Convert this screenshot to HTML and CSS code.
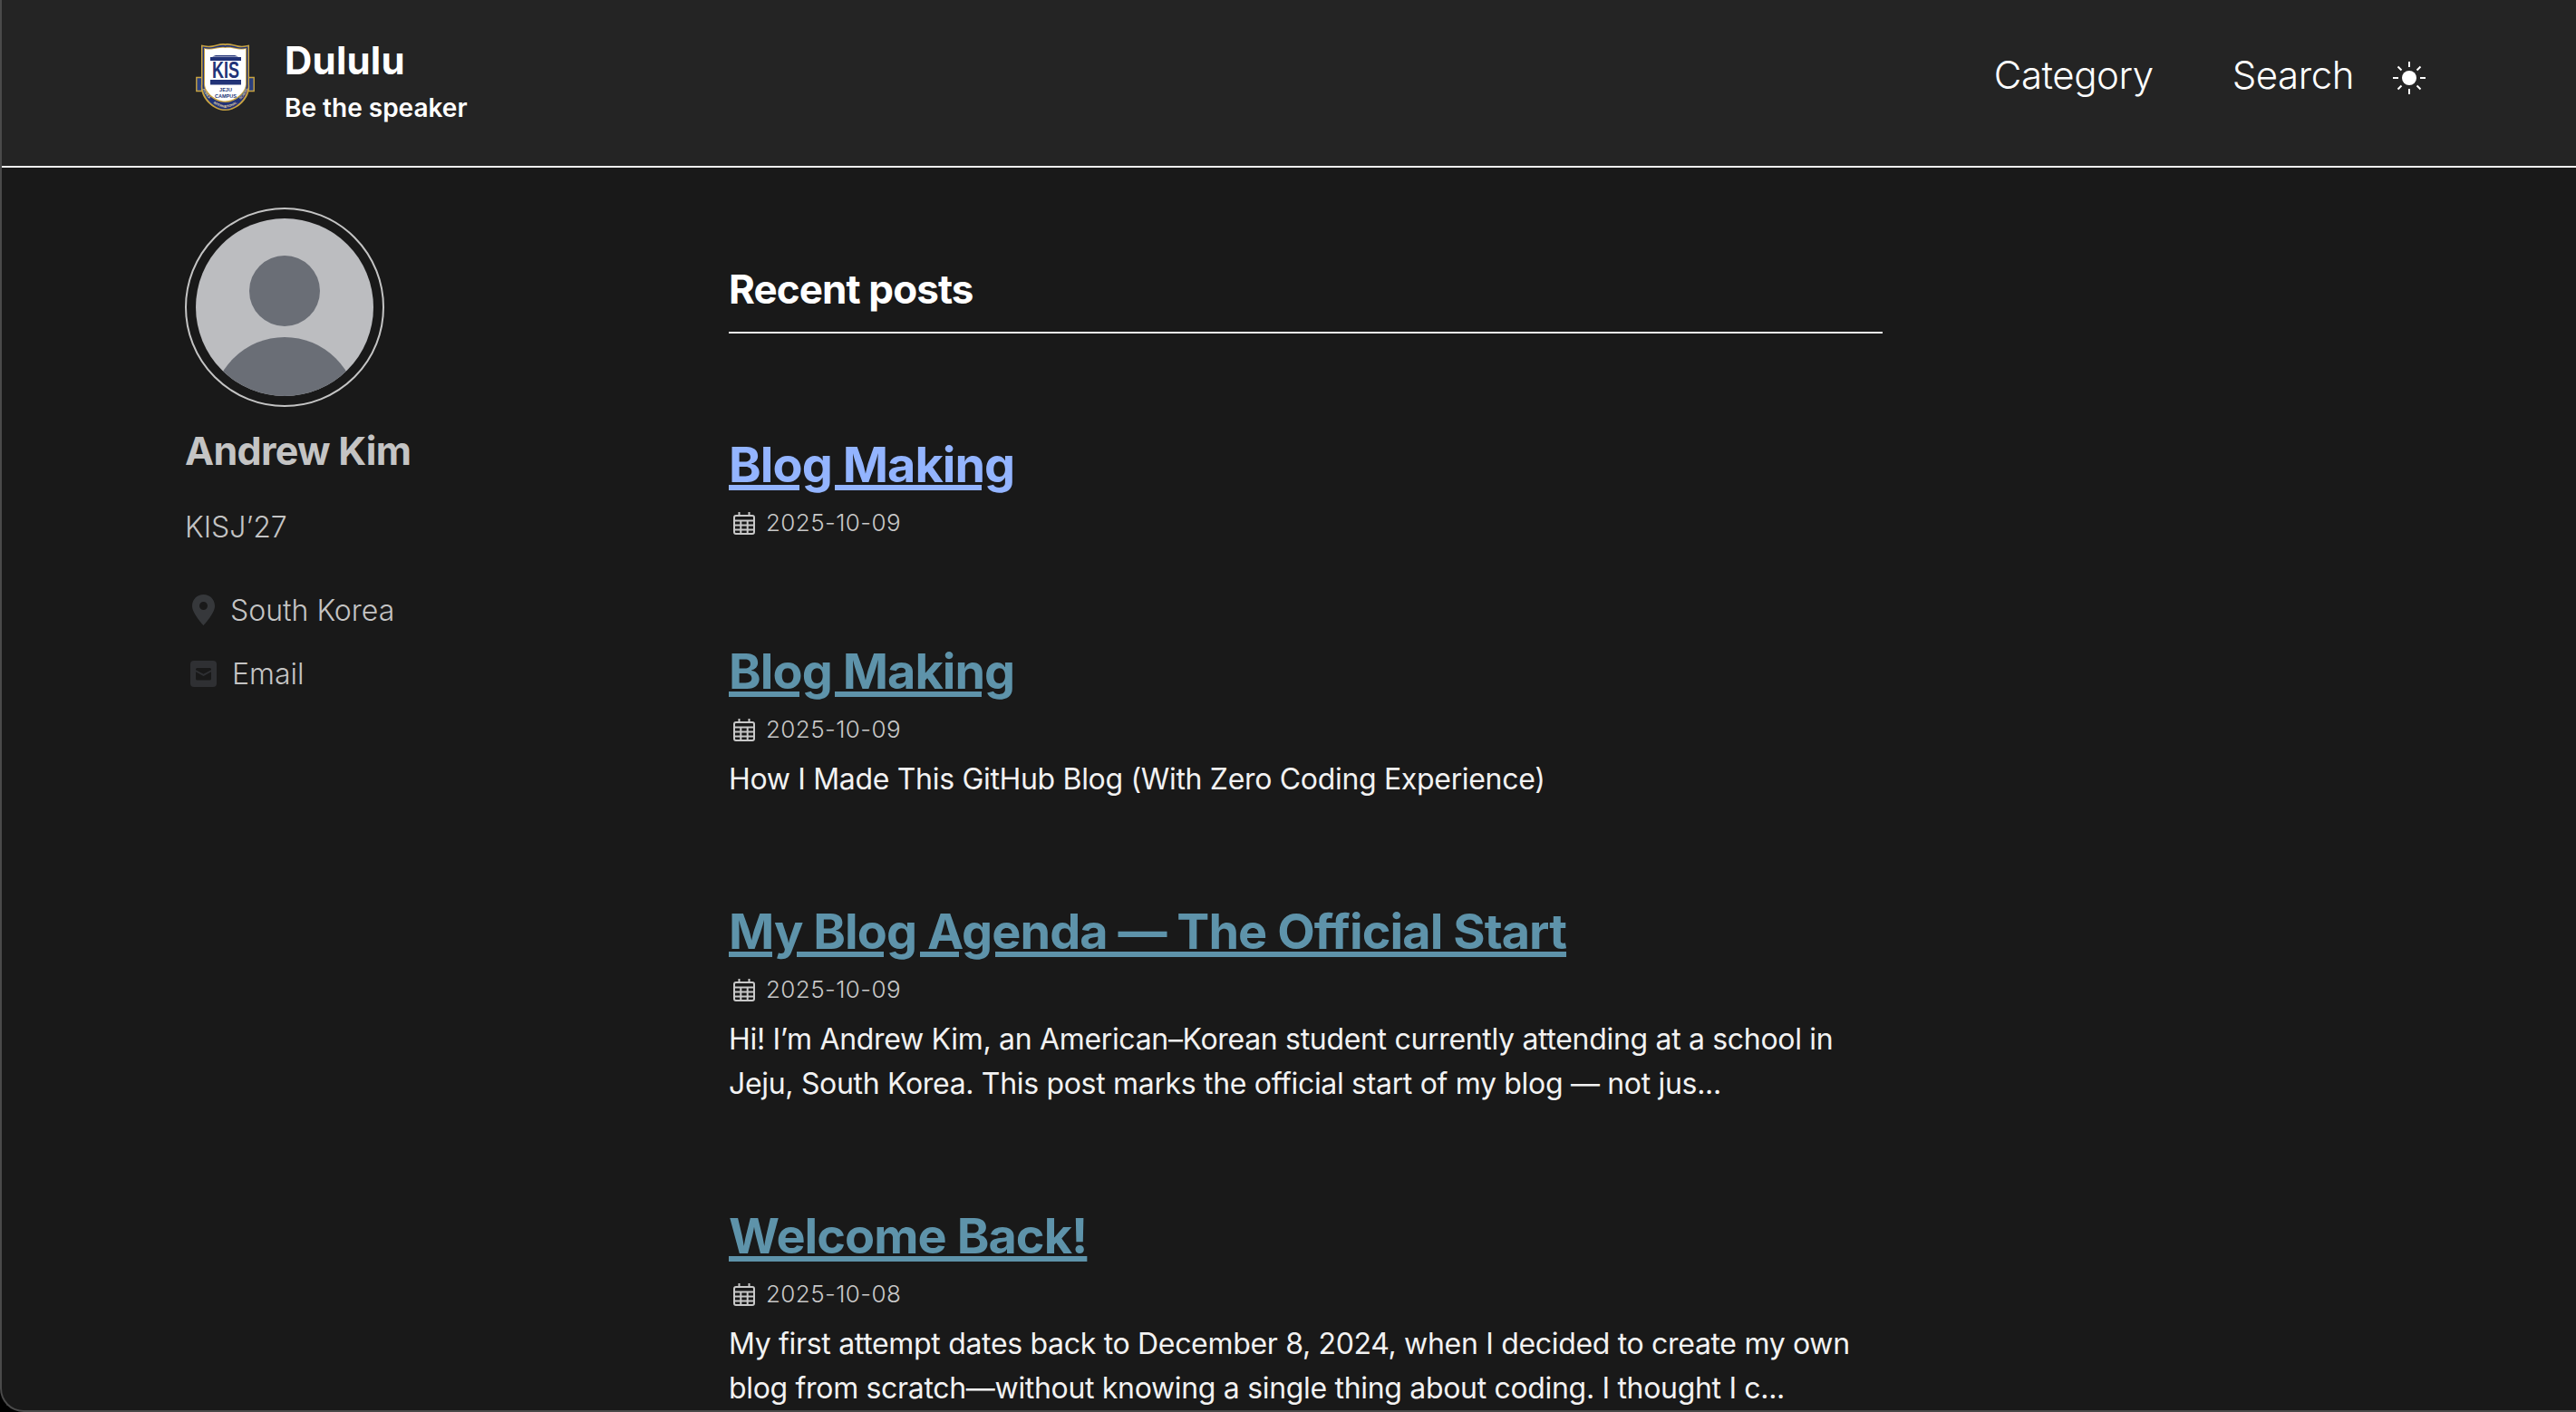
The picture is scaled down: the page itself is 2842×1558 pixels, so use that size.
FILE: index.html
```html
<!DOCTYPE html>
<html lang="en">
<head>
<meta charset="utf-8">
<title>Dululu</title>
<link rel="stylesheet" href="styles.css">
</head>
<body>
<div class="window">
  <header class="masthead">
    <a class="brand">
      <svg class="logo" viewBox="0 0 65 76" width="65" height="76">
        <defs>
          <path id="logo-arc-left" d="M7 50Q10 58 16 63"/>
          <path id="logo-arc-mid" d="M16 64Q24 71.500 32.500 71.500T49 64"/>
          <path id="logo-arc-right" d="M49 63Q55 58 58 50"/>
        </defs>
        <path d="M.8 38.500h6v15h-6zM58.200 38.500h6v15h-6z" fill="#2a3f7e" stroke="#c9a441" stroke-width="1.400"/>
        <path d="M6 2.500c4 1 8 1.500 12 .8 5-1 10-3.300 14.500-2 4.500-1.300 9.500 1 14.500 2 4 .7 8 .2 12-.8V46C61 60 47 75 32.500 75S4 60 6 46z" fill="#c9a441"/>
        <path d="M7.500 4.300c4 .9 7.500 1.200 11 .6 5-1 10-2.800 14-1.700 4-1.100 9 .7 14 1.700 3.500.6 7 .3 11-.6V46C59 58 46 73.500 32.500 73.500S6 58 7.500 46z" fill="#223377"/>
        <path d="M9 6c3.500.7 6.500.9 9.800.3 5-1 9.700-2.300 13.700-1.300 4-1 8.700.3 13.700 1.300 3.300.6 6.300.4 9.800-.3v40C56 55 45 66 32.500 66S9 55 9 46z" fill="#c9a441"/>
        <path d="M10 7c3 .6 5.800.8 8.800.3 5-1 9.700-2.300 13.700-1.300 4-1 8.700.3 13.700 1.300 3 .5 5.800.3 8.800-.3v39C55 54 44 64.500 32.500 64.500S10 54 10 46z" fill="#fff"/>
        <path d="M18 15.500 22 14H43l4 1.500zM16 16h34v4H16zM16 41h34v5.500H16z" fill="#223377"/>
        <text x="33" y="39" textLength="30" lengthAdjust="spacingAndGlyphs" class="logo-kis">KIS</text>
        <text x="33" y="54" class="logo-small">JEJU</text>
        <text x="33" y="60.500" class="logo-small">CAMPUS</text>
        <text class="logo-banner"><textPath href="#logo-arc-left" startOffset="50%">KOREA</textPath></text>
        <text class="logo-banner"><textPath href="#logo-arc-mid" startOffset="50%">INTERNATIONAL</textPath></text>
        <text class="logo-banner"><textPath href="#logo-arc-right" startOffset="50%">SCHOOL</textPath></text>
      </svg>
      <span class="brand-text">
        <span class="brand-title">Dululu</span>
        <span class="brand-sub">Be the speaker</span>
      </span>
    </a>
    <nav class="nav">
      <a class="nav-link">Category</a>
      <a class="nav-link">Search</a>
      <svg class="sun" viewBox="0 0 36 36" width="36" height="36">
        <circle cx="18" cy="18" r="8" fill="#fff"/>
        <g stroke="#fff" stroke-width="2" fill="none">
          <path d="M18 0v6M18 30v6M0 18h6M30 18h6M5.500 5.500l4 4M30.500 5.500l-4 4M5.500 30.500l4-4M30.500 30.500l-4-4"/>
        </g>
      </svg>
    </nav>
  </header>

  <div class="layout">
    <aside class="sidebar">
      <div class="avatar">
        <svg viewBox="0 0 196 196" width="196" height="196">
          <defs><clipPath id="avatar-clip"><circle cx="98" cy="98" r="98"/></clipPath></defs>
          <g clip-path="url(#avatar-clip)">
            <rect width="196" height="196" fill="#bcbdc0"/>
            <circle cx="98" cy="80" r="39" fill="#6a6e76"/>
            <circle cx="98" cy="211" r="80" fill="#6a6e76"/>
          </g>
        </svg>
      </div>
      <h3 class="author-name">Andrew Kim</h3>
      <p class="author-bio">KISJ’27</p>
      <ul class="author-links">
        <li class="author-link">
          <svg class="icon-pin" viewBox="0 0 25 34" width="25" height="34"><path fill-rule="evenodd" d="M12.500 0C5.600 0 0 5.500 0 12.400 0 21 12.500 34 12.500 34S25 21 25 12.400C25 5.500 19.400 0 12.500 0zm0 8a4.500 4.500 0 1 1 0 9 4.500 4.500 0 0 1 0-9z" fill="#36383b"/></svg>
          <span>South Korea</span>
        </li>
        <li class="author-link">
          <svg class="icon-mail" viewBox="0 0 29 29" width="29" height="29"><rect width="29" height="29" rx="4" fill="#2f3033"/><path d="M6 9.500a1.500 1.500 0 0 1 1.500-1.500h14A1.500 1.500 0 0 1 23 9.500v.7l-8.500 4.600L6 10.200zM6 12.300l8.500 4.600 8.500-4.600V20a1.500 1.500 0 0 1-1.500 1.500h-14A1.500 1.500 0 0 1 6 20z" fill="#191919"/></svg>
          <span>Email</span>
        </li>
      </ul>
    </aside>

    <main class="content">
      <h2 class="section-title">Recent posts</h2>

      <article class="post">
        <h2 class="post-title"><a class="post-link post-link-hover">Blog Making</a></h2>
        <p class="post-meta">
          <svg class="icon-cal" viewBox="0 0 24 25" width="24" height="25"><path d="M3 4h18a2 2 0 0 1 2 2v16a2 2 0 0 1-2 2H3a2 2 0 0 1-2-2V6a2 2 0 0 1 2-2zM1 9.500h22M1 14.500h22M1 19.500h22M8.300 9.500V24M15.700 9.500V24M6.500 0v4M17.500 0v4" fill="none" stroke="#c8c8c8" stroke-width="2"/></svg>
          <span>2025-10-09</span>
        </p>
      </article>

      <article class="post">
        <h2 class="post-title"><a class="post-link">Blog Making</a></h2>
        <p class="post-meta">
          <svg class="icon-cal" viewBox="0 0 24 25" width="24" height="25"><path d="M3 4h18a2 2 0 0 1 2 2v16a2 2 0 0 1-2 2H3a2 2 0 0 1-2-2V6a2 2 0 0 1 2-2zM1 9.500h22M1 14.500h22M1 19.500h22M8.300 9.500V24M15.700 9.500V24M6.500 0v4M17.500 0v4" fill="none" stroke="#c8c8c8" stroke-width="2"/></svg>
          <span>2025-10-09</span>
        </p>
        <p class="post-excerpt">How I Made This GitHub Blog (With Zero Coding Experience)</p>
      </article>

      <article class="post">
        <h2 class="post-title"><a class="post-link">My Blog Agenda — The Official Start</a></h2>
        <p class="post-meta">
          <svg class="icon-cal" viewBox="0 0 24 25" width="24" height="25"><path d="M3 4h18a2 2 0 0 1 2 2v16a2 2 0 0 1-2 2H3a2 2 0 0 1-2-2V6a2 2 0 0 1 2-2zM1 9.500h22M1 14.500h22M1 19.500h22M8.300 9.500V24M15.700 9.500V24M6.500 0v4M17.500 0v4" fill="none" stroke="#c8c8c8" stroke-width="2"/></svg>
          <span>2025-10-09</span>
        </p>
        <p class="post-excerpt">Hi! I’m Andrew Kim, an American–Korean student currently attending at a school in Jeju, South Korea. This post marks the official start of my blog — not jus...</p>
      </article>

      <article class="post">
        <h2 class="post-title"><a class="post-link">Welcome Back!</a></h2>
        <p class="post-meta">
          <svg class="icon-cal" viewBox="0 0 24 25" width="24" height="25"><path d="M3 4h18a2 2 0 0 1 2 2v16a2 2 0 0 1-2 2H3a2 2 0 0 1-2-2V6a2 2 0 0 1 2-2zM1 9.500h22M1 14.500h22M1 19.500h22M8.300 9.500V24M15.700 9.500V24M6.500 0v4M17.500 0v4" fill="none" stroke="#c8c8c8" stroke-width="2"/></svg>
          <span>2025-10-08</span>
        </p>
        <p class="post-excerpt">My first attempt dates back to December 8, 2024, when I decided to create my own blog from scratch—without knowing a single thing about coding. I thought I c...</p>
      </article>
    </main>
  </div>
</div>
</body>
</html>
```

FILE: styles.css
```css
* { box-sizing: border-box; }

html, body {
  margin: 0;
  height: 100%;
  background: #000;
  overflow: hidden;
}

body {
  font-family: Inter, "Liberation Sans", sans-serif;
  color: #fff;
}

.window {
  height: 100vh;
  overflow: hidden;
  background: #191919;
  border-left: 2px solid #4a4a4a;
  border-bottom: 2px solid #4a4a4a;
  border-bottom-left-radius: 26px;
}

.masthead {
  display: flex;
  justify-content: space-between;
  align-items: center;
  height: 185px;
  padding: 0 166px 14px 214px;
  background: #242424;
  border-bottom: 2px solid #eee;
}

.brand {
  display: flex;
  align-items: center;
  gap: 33px;
}

.logo { display: block; }

.logo-kis {
  font: 700 25px "Liberation Sans", sans-serif;
  fill: #223377;
  text-anchor: middle;
}

.logo-small {
  font: 700 5.500px "Liberation Sans", sans-serif;
  fill: #223377;
  text-anchor: middle;
}

.logo-banner {
  font: 700 3.600px "Liberation Sans", sans-serif;
  fill: #e6d9a8;
  text-anchor: middle;
}

.brand-text {
  display: flex;
  flex-direction: column;
  gap: 10px;
  padding-top: 8px;
}

.brand-title {
  font-size: 42px;
  font-weight: 700;
  letter-spacing: 0.2px;
  line-height: 50px;
}

.brand-sub {
  font-size: 28px;
  font-weight: 600;
  line-height: 34px;
}

.nav {
  display: flex;
  align-items: center;
}

.nav-link {
  font-size: 42px;
  font-weight: 300;
  letter-spacing: -0.45px;
  line-height: 50px;
  margin: 0 87px 3px 0;
}

.nav-link:nth-child(2) { margin-right: 43px; }

.sun { display: block; margin-top: 2px; }

.layout {
  display: flex;
  padding-left: 202px;
}

.sidebar {
  flex: 0 0 600px;
  padding-top: 44px;
  color: #c4c4c4;
}

.avatar {
  width: 220px;
  height: 220px;
  padding: 10px;
  border: 2px solid #c4c4c4;
  border-radius: 50%;
}

.avatar svg { display: block; }

.author-name {
  margin: 21px 0 0;
  font-size: 43px;
  font-weight: 700;
  letter-spacing: -0.7px;
  line-height: 54px;
}

.author-bio {
  margin: 33px 0 0;
  font-size: 32px;
  font-weight: 300;
  line-height: 50px;
}

.author-links {
  list-style: none;
  margin: 31px 0 0;
  padding: 0;
}

.author-link {
  display: flex;
  align-items: center;
  height: 70px;
  font-size: 32px;
  font-weight: 300;
  gap: 17px;
  padding-left: 8px;
}

.icon-mail { margin-left: -2px; }

.content {
  flex: 0 0 1273px;
  padding-top: 108px;
}

.section-title {
  margin: 0;
  padding-bottom: 21px;
  font-size: 44px;
  font-weight: 700;
  letter-spacing: -0.9px;
  line-height: 52px;
  border-bottom: 2px solid #eee;
}

.post { margin-top: 108px; }

.post:first-of-type { margin-top: 109px; }

.post-title {
  margin: 0;
  font-size: 54px;
  font-weight: 650;
  letter-spacing: -0.95px;
  line-height: 72px;
}

.post-link {
  color: #5e93aa;
  text-decoration: underline;
  text-decoration-thickness: 6px;
  text-underline-offset: 3px;
}

.post-link-hover { color: #93b4ff; }

.post-meta {
  display: flex;
  align-items: center;
  gap: 12px;
  margin: 8px 0 0 5px;
  font-size: 26px;
  font-weight: 300;
  letter-spacing: 0.4px;
  line-height: 40px;
  color: #c8c8c8;
}

.icon-cal { display: block; }

.post-excerpt {
  margin: 10px 0 0;
  font-size: 32px;
  font-weight: 400;
  letter-spacing: -0.32px;
  line-height: 49px;
  color: #f2f2f2;
}
```
